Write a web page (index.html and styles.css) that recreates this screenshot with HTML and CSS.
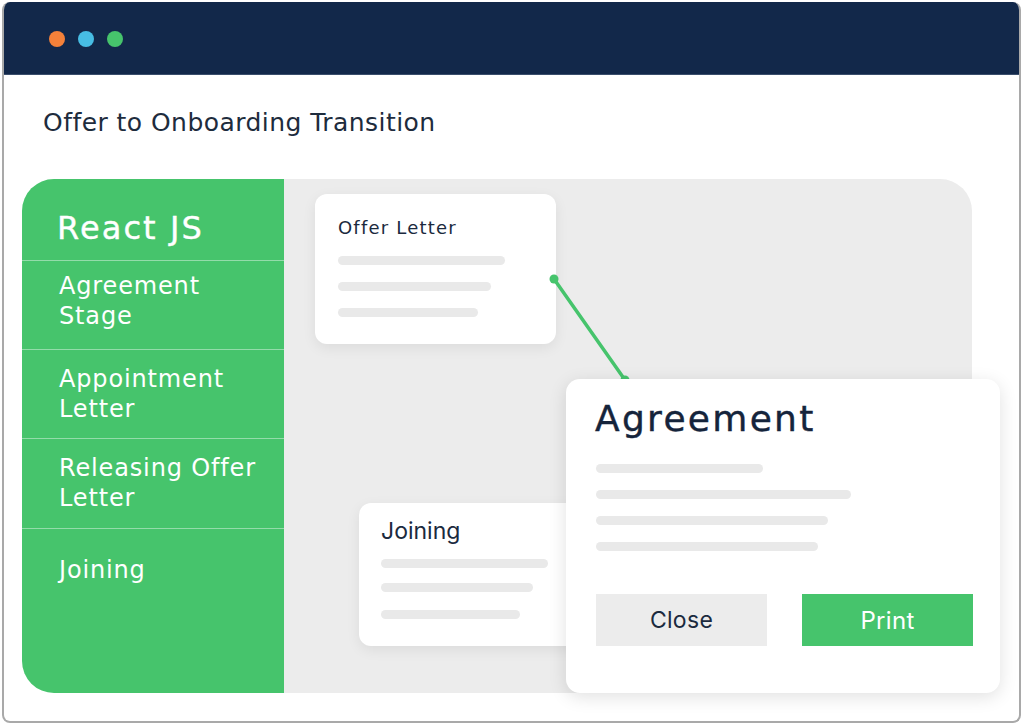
FILE: index.html
```html
<!DOCTYPE html>
<html lang="en">
<head>
<meta charset="utf-8">
<title>Offer to Onboarding Transition</title>
<link rel="stylesheet" href="styles.css">
</head>
<body>
<div class="window">
  <div class="topbar">
    <span class="dot dot-orange"></span>
    <span class="dot dot-blue"></span>
    <span class="dot dot-green"></span>
  </div>
  <div class="content">
    <h1 class="title">Offer to Onboarding Transition</h1>
    <div class="panel">
      <nav class="sidebar">
        <div class="side-head">React JS</div>
        <div class="side-item">Agreement<br>Stage</div>
        <div class="side-item">Appointment<br>Letter</div>
        <div class="side-item">Releasing Offer<br>Letter</div>
        <div class="side-item side-last">Joining</div>
      </nav>
      <div class="canvas">
        <div class="card card-offer">
          <div class="card-title">Offer Letter</div>
          <div class="skel" style="width:167px"></div>
          <div class="skel" style="width:153px"></div>
          <div class="skel" style="width:140px"></div>
        </div>
        <div class="card card-join">
          <div class="card-title card-title-alt">Joining</div>
          <div class="skel" style="width:167px"></div>
          <div class="skel" style="width:152px"></div>
          <div class="skel" style="width:139px"></div>
        </div>
        <svg class="connector" width="90" height="120" viewBox="0 0 90 120">
          <line x1="10" y1="10" x2="81" y2="111" stroke="#46c46c" stroke-width="3.5" stroke-linecap="round"/>
          <circle cx="10" cy="10" r="4.5" fill="#46c46c"/>
          <circle cx="81" cy="111" r="4.5" fill="#46c46c"/>
        </svg>
      </div>
      <div class="modal">
        <div class="modal-title">Agreement</div>
        <div class="modal-lines">
          <div class="skel" style="width:167px"></div>
          <div class="skel" style="width:255px"></div>
          <div class="skel" style="width:232px"></div>
          <div class="skel" style="width:222px"></div>
        </div>
        <div class="modal-actions">
          <div class="btn btn-close">Close</div>
          <div class="btn btn-print">Print</div>
        </div>
      </div>
    </div>
  </div>
</div>
</body>
</html>
```

FILE: styles.css
```css
* { box-sizing: border-box; }
html, body { margin: 0; padding: 0; background: #ffffff; }
body { font-family: "DejaVu Sans", "Open Sans", sans-serif; color: #1b2a3e; }

.window {
  margin: 2px 0 0 2px;
  width: 1019px;
  height: 721px;
  border: 2px solid #a9a9a9;
  border-top: none;
  border-radius: 8px;
  overflow: hidden;
  display: flex;
  flex-direction: column;
  background: #fff;
}

.topbar {
  height: 73px;
  background: #12284a;
  display: flex;
  align-items: center;
  gap: 13px;
  padding-left: 47px;
  flex: none;
  margin: 0 -2px;
  border-bottom: 1px solid #3a4e6c;
}
.dot { width: 16px; height: 16px; border-radius: 50%; display: block; margin-top: 2px; }
.dot-orange { background: #f4813a; }
.dot-blue { background: #47bde4; }
.dot-green { background: #46c46c; }

.content { padding-left: 18px; }

.title {
  margin: 25px 0 0 21px;
  height: 79px;
  font-size: 25px;
  font-weight: 400;
  line-height: 46px;
  color: #1e2c3d;
  letter-spacing: 0.45px;
}

.panel {
  position: relative;
  width: 950px;
  height: 514px;
  display: flex;
}

.sidebar {
  width: 262px;
  background: #46c46c;
  border-radius: 32px 0 0 32px;
  color: #fff;
  flex: none;
}
.side-head {
  height: 82px;
  padding: 29px 0 0 35px;
  font-size: 32px;
  line-height: 40px;
  font-weight: 400;
  letter-spacing: 2.1px;
  border-bottom: 1px solid #93dcaa;
  -webkit-text-stroke: 0.4px #fff;
}
.side-item {
  height: 89px;
  padding: 10px 0 0 37px;
  font-size: 24px;
  line-height: 30px;
  letter-spacing: 0.85px;
  border-bottom: 1px solid #93dcaa;
}
.side-item:nth-child(3) { padding-top: 14px; }
.side-item:nth-child(4) { height: 90px; padding-top: 14px; }
.side-last { border-bottom: none; padding-top: 26px; }

.canvas {
  position: relative;
  flex: 1;
  background: #ececec;
  border-radius: 0 32px 0 0;
}

.card {
  position: absolute;
  background: #fff;
  border-radius: 12px;
  box-shadow: 0 4px 14px rgba(0,0,0,0.07);
  padding: 21px 0 0 23px;
}
.card-offer { left: 31px; top: 15px; width: 241px; height: 150px; }
.card-join { left: 75px; top: 324px; width: 240px; height: 143px; padding-left: 22px; padding-top: 15px; }
.card-title {
  font-size: 18px;
  line-height: 26px;
  font-weight: 400;
  color: #1b2a3e;
  letter-spacing: 1.2px;
  margin-bottom: 15px;
}
.card-title-alt { font-family: "Inter", "Liberation Sans", sans-serif; font-size: 23px; letter-spacing: 0; margin-bottom: 15px; }

.skel {
  height: 9px;
  border-radius: 5px;
  background: #e9e9e9;
  margin-bottom: 17px;
}
.card-join .skel { margin-bottom: 15px; }
.card-join .skel:nth-child(3) { margin-bottom: 18px; }

.connector { position: absolute; left: 260px; top: 90px; }

.modal {
  position: absolute;
  left: 544px;
  top: 200px;
  width: 434px;
  height: 314px;
  background: #fff;
  border-radius: 14px;
  box-shadow: 0 4px 18px rgba(0,0,0,0.12);
  padding: 16px 0 0 29px;
}
.modal-title {
  font-size: 36px;
  line-height: 48px;
  font-weight: 400;
  color: #15243b;
  letter-spacing: 2.3px;
  -webkit-text-stroke: 0.4px #15243b;
}
.modal-lines { margin: 21px 0 0 1px; }
.modal-lines .skel { margin-bottom: 17px; }
.modal-actions {
  display: flex;
  gap: 35px;
  margin: 43px 0 0 1px;
}
.btn {
  width: 171px;
  height: 52px;
  display: flex;
  align-items: center;
  justify-content: center;
  font-family: "Inter", "Liberation Sans", sans-serif;
  font-size: 23px;
  letter-spacing: 0.3px;
}
.btn-close { background: #ececec; color: #1b2a3e; }
.btn-print { background: #46c46c; color: #fff; font-size: 24px; }
```
